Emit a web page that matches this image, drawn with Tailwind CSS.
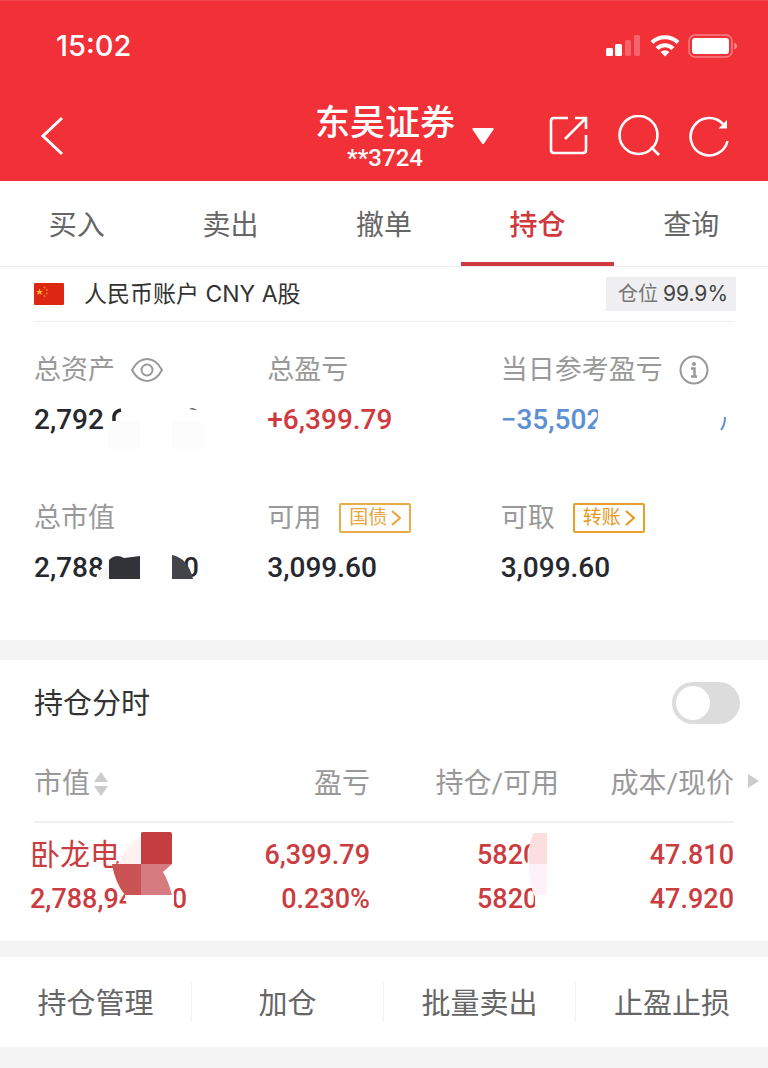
<!DOCTYPE html>
<html lang="zh-CN">

<head>
    <meta charset="UTF-8">
    <meta name="viewport" content="width=device-width, initial-scale=1.0">
    <title>东吴证券 - 持仓</title>
    <script src="https://cdn.jsdelivr.net/npm/@tailwindcss/browser@4"></script>
</head>

<body class="min-h-screen bg-[#f4f4f4] font-['Roboto','Noto_Sans_CJK_SC',sans-serif] text-[#333]">

    <!-- Header -->
    <header class="bg-[#f23038] text-white">
        <div class="flex h-[90px] items-center justify-between border-t border-[#f04a50] pl-14 pr-[30px]">
            <span class="font-['Inter',sans-serif] text-[29px] font-medium">15:02</span>
            <div class="flex items-center gap-2">
                <svg class="h-6 w-9" viewBox="0 0 36 24" fill="#fff">
                    <rect x="0" y="14" width="7" height="8" rx="1.5" />
                    <rect x="9" y="10" width="7" height="12" rx="1.5" />
                    <rect x="19" y="6" width="6" height="16" rx="1.5" opacity=".25" />
                    <rect x="28" y="1" width="6" height="21" rx="1.5" opacity=".25" />
                </svg>
                <svg class="h-6 w-[30px]" viewBox="0 0 30 24" fill="none" stroke="#fff" stroke-width="4">
                    <path d="M2 8.500C9 1.500 21 1.500 28 8.500" />
                    <path d="M7 14.500C11.500 10 18.500 10 23 14.500" />
                    <path d="M15 22.500L10.500 18Q15 14.500 19.500 18Z" fill="#fff" stroke="none" />
                </svg>
                <svg class="h-6 w-[50px]" viewBox="0 0 50 24">
                    <rect x="1" y="1" width="43" height="22" rx="6" fill="none" stroke="#fff" stroke-opacity=".4" stroke-width="1.500" />
                    <rect x="4" y="4" width="37" height="16" rx="3" fill="#fff" />
                    <path d="M46.500 8.500Q49 9.500 49 12Q49 14.500 46.500 15.500Z" fill="#fff" opacity=".5" />
                </svg>
            </div>
        </div>
        <div class="grid h-[91px] grid-cols-[1fr_auto_1fr] items-center pl-10 pr-[38px]">
            <button class="w-6" aria-label="返回">
                <svg class="h-10 w-6" viewBox="0 0 24 40" fill="none" stroke="#fff" stroke-width="3">
                    <path d="M22 2L3 20L22 38" />
                </svg>
            </button>
            <h1 class="pt-1 text-center font-medium">
                <span class="block text-[35px] leading-10">东吴证券</span>
                <span class="block text-2xl leading-7">**3724</span>
            </h1>
            <div class="flex items-center justify-between pl-4">
                <button aria-label="切换账户">
                    <svg class="h-[18px] w-6" viewBox="0 0 24 18" fill="#fff">
                        <path d="M2 1H22Q23 1.500 22.500 2.500L13 16.500Q12 17.500 11 16.500L1.500 2.500Q1 1.500 2 1Z" />
                    </svg>
                </button>
                <div class="flex items-center gap-7">
                    <button aria-label="分享">
                        <svg class="h-[42px] w-[42px]" viewBox="0 0 42 42" fill="none" stroke="#fff" stroke-width="2.600">
                            <path d="M20 3H6Q3 3 3 6V35Q3 38 6 38H35Q38 38 38 35V20" />
                            <path d="M17 24L37 4M27 3H38V14" />
                        </svg>
                    </button>
                    <button aria-label="搜索">
                        <svg class="h-[42px] w-[42px]" viewBox="0 0 42 42" fill="none" stroke="#fff" stroke-width="2.600">
                            <circle cx="20.500" cy="20" r="19" />
                            <path d="M33 32L41 40" />
                        </svg>
                    </button>
                    <button aria-label="刷新">
                        <svg class="h-[42px] w-[42px]" viewBox="0 0 42 42" fill="none" stroke="#fff" stroke-width="2.600">
                            <path d="M39.500 26A18.700 18.700 0 1 1 35 9" />
                            <path d="M39 5V13.500H30.500Z" fill="#fff" stroke="none" />
                        </svg>
                    </button>
                </div>
            </div>
        </div>
    </header>

    <!-- Tabs -->
    <nav class="grid h-[86px] grid-cols-5 border-b border-[#ececec] bg-white text-center text-[28px] text-[#666]">
        <a href="#" class="border-b-4 border-transparent pt-6">买入</a>
        <a href="#" class="border-b-4 border-transparent pt-6">卖出</a>
        <a href="#" class="border-b-4 border-transparent pt-6">撤单</a>
        <a href="#" class="border-b-4 border-[#d0393e] pt-6 font-medium text-[#d0393e]">持仓</a>
        <a href="#" class="border-b-4 border-transparent pt-6">查询</a>
    </nav>

    <main>
        <!-- Account summary -->
        <section class="bg-white px-[34px] pb-[46px]">
            <div class="flex h-[55px] items-center border-b border-[#eee]">
                <svg class="h-[22px] w-[30px]" viewBox="0 0 30 22">
                    <rect width="30" height="22" rx="1" fill="#dd2713" />
                    <path d="M5.500 5.500L6.500 8H9L7 9.500L8 12L5.500 10.500L3 12L4 9.500L2 8H4.500Z" fill="#f8b62c" />
                    <g fill="#e8792a">
                        <circle cx="10.500" cy="4.500" r="1" />
                        <circle cx="12.800" cy="7" r="1" />
                        <circle cx="12.800" cy="10.500" r="1" />
                        <circle cx="10.500" cy="13" r="1" />
                    </g>
                </svg>
                <h2 class="ml-5 font-['Inter','Noto_Sans_CJK_SC',sans-serif] text-[23px]">人民币账户 CNY A股</h2>
                <span class="-mr-0.5 ml-auto bg-[#efeff2] pl-3 pr-2 text-[20px] leading-[34px] text-[#777]">仓位
                    <span class="font-['Inter',sans-serif] text-[21px] text-[#444]">99.9%</span></span>
            </div>

            <dl class="grid grid-cols-3 gap-y-12 pt-6">
                <div>
                    <dt class="flex h-12 items-center gap-4 text-[27px] text-[#999]">总资产
                        <button aria-label="隐藏资产">
                            <svg class="h-6 w-8" viewBox="0 0 32 24" fill="none" stroke="#999" stroke-width="2">
                                <path d="M1 12Q7 1 16 1T31 12Q25 23 16 23T1 12Z" />
                                <circle cx="16" cy="12" r="5.500" />
                            </svg>
                        </button>
                    </dt>
                    <dd class="relative text-[28px] font-medium leading-[52px] text-[#26282e]">2,792
                        <svg class="absolute left-[72px] top-2 h-12 w-[100px]" viewBox="0 0 100 48">
                            <path d="M8 21V14Q9 9 15 8" fill="none" stroke="#26282e" stroke-width="3.500" />
                            <path d="M83 7Q87 5 91 8Z" fill="#26282e" />
                            <path d="M2 19H34V47H2ZM66 19H97V47H66Z" fill="#fcfcfc" />
                        </svg>
                    </dd>
                </div>
                <div>
                    <dt class="flex h-12 items-center text-[27px] text-[#999]">总盈亏</dt>
                    <dd class="text-[28px] font-medium leading-[52px] text-[#d0393e]">+6,399.79</dd>
                </div>
                <div>
                    <dt class="flex h-12 items-center gap-4 whitespace-nowrap text-[27px] text-[#999]">当日参考盈亏
                        <button aria-label="说明">
                            <svg class="h-[30px] w-[30px]" viewBox="0 0 30 30" fill="none" stroke="#999" stroke-width="2">
                                <circle cx="15" cy="15" r="13.500" />
                                <circle cx="15" cy="9" r="2" fill="#999" stroke="none" />
                                <path d="M12 13.500H15.500V21M12 21.500H18" stroke-width="2.500" />
                            </svg>
                        </button>
                    </dt>
                    <dd class="relative text-[28px] font-medium leading-[52px] text-[#5b90d4]">−35,502
                        <svg class="absolute left-[94px] top-2 h-9 w-[132px]" viewBox="0 0 132 36">
                            <path d="M3 0H132V36H0V27L3 15Z" fill="#fff" />
                            <path d="M130 15Q130 23 126 28" fill="none" stroke="#5b90d4" stroke-width="2" />
                        </svg>
                    </dd>
                </div>
                <div>
                    <dt class="flex h-12 items-center text-[27px] text-[#999]">总市值</dt>
                    <dd class="relative text-[28px] font-medium leading-[52px] text-[#26282e]">
                        <span class="flex w-[165px] justify-between"><span>2,788</span><span>0</span></span>
                        <svg class="absolute left-[60px] top-2 h-8 w-[105px]" viewBox="0 0 105 32">
                            <path d="M12 16L4 21L1 32H89V8H12Z" fill="#fff" />
                            <path d="M12 18L5 22L3 30H15V10Z" fill="#f5f5f5" />
                            <path d="M15 10Q22 3 30 8L46 6V29H15Z" fill="#313338" />
                            <path d="M78 5Q94 8 99 29H78Z" fill="#44454a" />
                        </svg>
                    </dd>
                </div>
                <div>
                    <dt class="flex h-12 items-center gap-[18px] text-[27px] text-[#999]">可用
                        <button class="flex h-[30px] w-[72px] items-center justify-center gap-1 rounded-xs border-2 border-[#e8ad4b] text-[19px] text-[#e8a63c]">国债
                            <svg class="h-4 w-[10px]" viewBox="0 0 10 16" fill="none" stroke="#e8a63c" stroke-width="2.200">
                                <path d="M1 1L9 8L1 15" />
                            </svg>
                        </button>
                    </dt>
                    <dd class="text-[28px] font-medium leading-[52px] text-[#26282e]">3,099.60</dd>
                </div>
                <div>
                    <dt class="flex h-12 items-center gap-[18px] text-[27px] text-[#999]">可取
                        <button class="flex h-[30px] w-[72px] items-center justify-center gap-1 rounded-xs border-2 border-[#e8a02c] text-[19px] text-[#e8981c]">转账
                            <svg class="h-4 w-[10px]" viewBox="0 0 10 16" fill="none" stroke="#e8981c" stroke-width="2.200">
                                <path d="M1 1L9 8L1 15" />
                            </svg>
                        </button>
                    </dt>
                    <dd class="text-[28px] font-medium leading-[52px] text-[#26282e]">3,099.60</dd>
                </div>
            </dl>
        </section>

        <!-- Positions -->
        <section class="relative mt-5 bg-white">
            <div class="flex h-[86px] items-center justify-between pl-[34px] pr-7">
                <label for="intraday" class="pt-1 text-[29px]">持仓分时</label>
                <input id="intraday" type="checkbox" class="h-[42px] w-[68px] appearance-none rounded-full bg-[#dcdcdc] p-1 before:block before:size-[34px] before:rounded-full before:bg-white checked:bg-[#d0393e] checked:before:ml-auto">
            </div>
            <div class="px-[34px]">
                <table class="w-full table-fixed text-right">
                    <thead>
                        <tr class="h-[76px] border-b-2 border-[#f0f0f0] text-[28px] text-[#999]">
                            <th class="w-[24%] text-left font-normal">
                                <button class="flex items-center gap-1">市值
                                    <svg class="h-6 w-[14px]" viewBox="0 0 14 24" fill="#ccc">
                                        <path d="M7 0L14 10H0ZM0 14H14L7 24Z" />
                                    </svg>
                                </button>
                            </th>
                            <th class="w-[24%] font-normal">盈亏</th>
                            <th class="w-[27%] whitespace-nowrap font-normal">持仓/可用</th>
                            <th class="w-[25%] whitespace-nowrap font-normal">成本/现价</th>
                        </tr>
                    </thead>
                    <tbody>
                        <tr class="text-[27px] font-medium leading-[44px] text-[#ca3c3f]">
                            <td class="relative pb-5 pt-[10px] text-left">
                                <div class="-ml-1 text-[30px] font-normal">卧龙电</div>
                                <div class="-ml-1 flex w-[157px] justify-between"><span>2,788,94</span><span>0</span></div>
                                <svg class="absolute left-[74px] top-2 h-[100px] w-[72px]" viewBox="0 0 72 100">
                                    <path d="M15 12L11 32L6 34L9 55L17 64L22 94Q46 102 66 94V64L60 34L33 2Z" fill="#fff" />
                                    <path d="M33 5V33H11Q16 16 33 5Z" fill="#fff2f0" />
                                    <path d="M33 2Q33 1 35 1H62Q64 1 64 3V33H33Z" fill="#c43d40" />
                                    <path d="M4 33H33V64H17Q7 52 4 33Z" fill="#cc5353" />
                                    <path d="M33 33H64L55 41Q60 49 64 64H33Z" fill="#d67c80" />
                                </svg>
                            </td>
                            <td class="pb-5 pt-[10px]">6,399.79<br>0.230%</td>
                            <td class="pb-5 pt-[10px]">
                                <div class="relative ml-auto w-[82px] text-left">5820<br>5820
                                    <svg class="absolute left-[48px] top-0 h-[88px] w-[24px]" viewBox="0 0 24 88">
                                        <path d="M11 0Q-1 16 4 46L10 64V80H24V0Z" fill="#fff" />
                                        <path d="M9 0H22V31H4Q2 12 9 0Z" fill="#fbdedd" />
                                        <path d="M4 31H22V62H9Q4 48 4 31Z" fill="#fff1f8" />
                                    </svg>
                                </div>
                            </td>
                            <td class="pb-5 pt-[10px]">47.810<br>47.920</td>
                        </tr>
                    </tbody>
                </table>
            </div>
            <!-- More columns hint -->
            <svg class="absolute right-[9px] top-[114px] h-[14px] w-[11px]" viewBox="0 0 11 14" fill="#ccc">
                <path d="M0 0L11 7L0 14Z" />
            </svg>
        </section>

        <!-- Actions -->
        <section class="mt-4 grid h-[90px] grid-cols-4 items-center divide-x divide-[#f2f2f2] bg-white text-[29px] text-[#666]">
            <button class="h-10 leading-[44px]">持仓管理</button>
            <button class="h-10 leading-[44px]">加仓</button>
            <button class="h-10 leading-[44px]">批量卖出</button>
            <button class="h-10 leading-[44px]">止盈止损</button>
        </section>
    </main>
</body>

</html>
